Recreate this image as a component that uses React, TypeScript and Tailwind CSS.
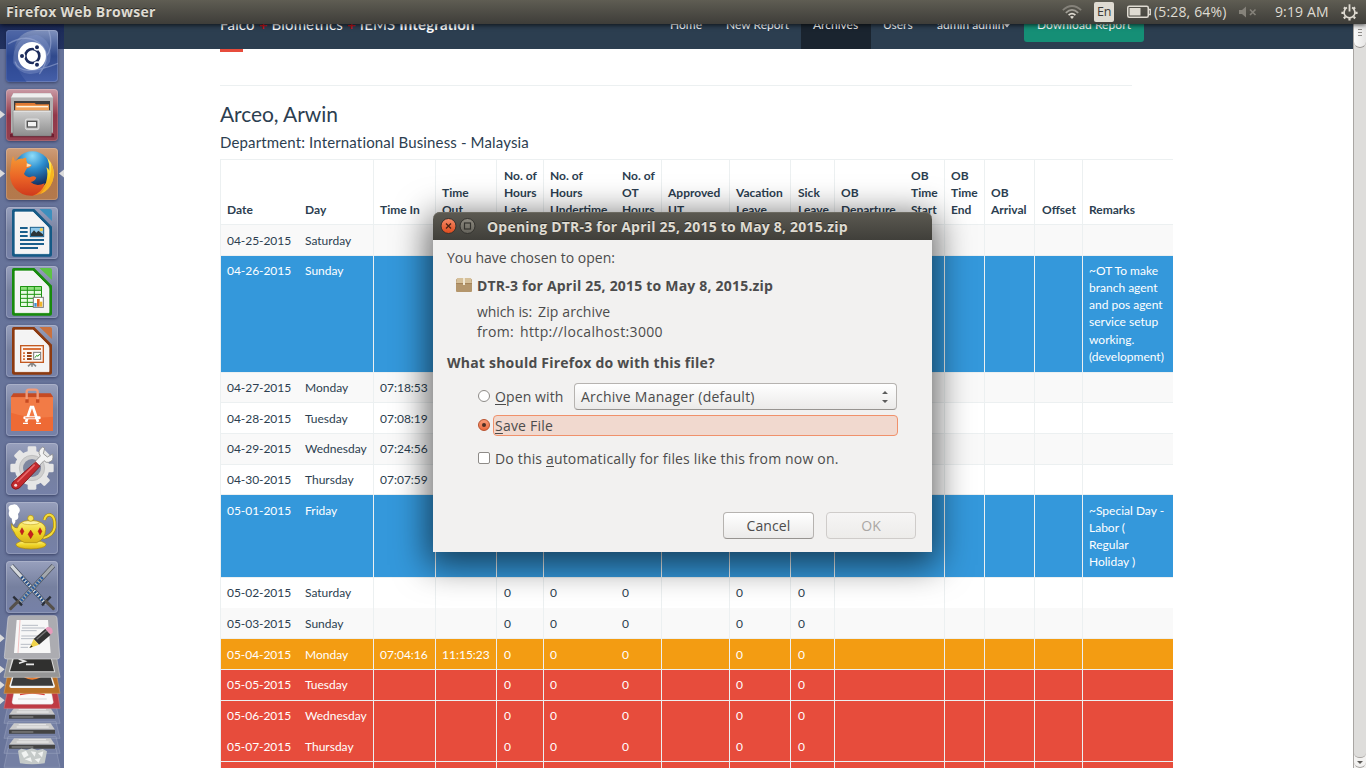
import React from "react";

type Tone = "plain" | "stripe" | "blue" | "orange" | "red";

const COLS = [
  "w-[78px] pl-[6px]",
  "w-[75px] border-l-transparent! pl-[6px]",
  "w-[62px] pl-[6px]",
  "w-[61px] pl-[6px]",
  "w-[47px] pl-[7px]",
  "w-[72px] pl-[6px]",
  "w-[46px] border-l-transparent! pl-[6px]",
  "w-[68px] pl-[6px]",
  "w-[61px] pl-[6px]",
  "w-[44px] pl-[7px]",
  "w-[70px] pl-[6px]",
  "w-[40px] border-l-transparent! pl-[6px]",
  "w-[40px] pl-[6px]",
  "w-[50px] pl-[6px]",
  "w-[48px] pl-[7px]",
  "w-[91px] pl-[6px]",
];

const HEADERS = [
  ["Date"],
  ["Day"],
  ["Time In"],
  ["Time", "Out"],
  ["No. of", "Hours", "Late"],
  ["No. of", "Hours", "Undertime"],
  ["No. of", "OT", "Hours"],
  ["Approved", "UT"],
  ["Vacation", "Leave"],
  ["Sick", "Leave"],
  ["OB", "Departure"],
  ["OB", "Time", "Start"],
  ["OB", "Time", "End"],
  ["OB", "Arrival"],
  ["Offset"],
  ["Remarks"],
];

interface Row {
  h: string;
  pad: string;
  tone: Tone;
  date: string;
  day: string;
  in?: string;
  out?: string;
  zeros?: boolean;
  remarks?: string[];
}

const ROWS: Row[] = [
  { h: "h-[31px] border-b", pad: "pt-[7px]", tone: "stripe", date: "04-25-2015", day: "Saturday" },
  {
    h: "h-[117px] border-b",
    pad: "pt-[6px]",
    tone: "blue",
    date: "04-26-2015",
    day: "Sunday",
    remarks: ["~OT To make", "branch agent", "and pos agent", "service setup", "working.", "(development)"],
  },
  { h: "h-[30px] border-b", pad: "pt-[6px]", tone: "stripe", date: "04-27-2015", day: "Monday", in: "07:18:53" },
  { h: "h-[31px] border-b", pad: "pt-[7px]", tone: "plain", date: "04-28-2015", day: "Tuesday", in: "07:08:19" },
  { h: "h-[31px] border-b", pad: "pt-[6px]", tone: "stripe", date: "04-29-2015", day: "Wednesday", in: "07:24:56" },
  { h: "h-[30px] border-b", pad: "pt-[6px]", tone: "plain", date: "04-30-2015", day: "Thursday", in: "07:07:59" },
  {
    h: "h-[83px] border-b",
    pad: "pt-[7px]",
    tone: "blue",
    date: "05-01-2015",
    day: "Friday",
    remarks: ["~Special Day -", "Labor (", "Regular", "Holiday )"],
  },
  { h: "h-[30px]", pad: "pt-[6px]", tone: "plain", date: "05-02-2015", day: "Saturday", zeros: true },
  { h: "h-[31px] border-b", pad: "pt-[7px]", tone: "stripe", date: "05-03-2015", day: "Sunday", zeros: true },
  { h: "h-[31px] border-b", pad: "pt-[7px]", tone: "orange", date: "05-04-2015", day: "Monday", in: "07:04:16", out: "11:15:23", zeros: true },
  { h: "h-[31px] border-b", pad: "pt-[6px]", tone: "red", date: "05-05-2015", day: "Tuesday", zeros: true },
  { h: "h-[30px]", pad: "pt-[6px]", tone: "red", date: "05-06-2015", day: "Wednesday", zeros: true },
  { h: "h-[31px] border-b", pad: "pt-[7px]", tone: "red", date: "05-07-2015", day: "Thursday", zeros: true },
  { h: "h-[31px] border-b", pad: "pt-[7px]", tone: "red", date: "", day: "" },
];

const TONES: Record<Tone, string> = {
  plain: "bg-white text-[#2c3e50]",
  stripe: "bg-[#f9f9f9] text-[#2c3e50]",
  blue: "bg-[#3498db] text-white",
  orange: "bg-[#f39c12] text-white",
  red: "bg-[#e74c3c] text-white",
};

function DataRow({ row }: { row: Row }) {
  const cell = (i: number): React.ReactNode => {
    if (i === 0) return <span className="tracking-[-0.05px]">{row.date}</span>;
    if (i === 1) return row.day;
    if (i === 2) return row.in;
    if (i === 3) return row.out;
    if (row.zeros && [4, 5, 6, 8, 9].includes(i)) return "0";
    if (i === 15) return row.remarks?.map((l) => <div key={l}>{l}</div>);
    return null;
  };
  return (
    <div className={`flex shrink-0 border-[#ecf0f1] ${row.h} ${TONES[row.tone]}`}>
      {COLS.map((c, i) => (
        <div key={i} className={`shrink-0 border-l border-[#ecf0f1] whitespace-nowrap ${row.pad} ${c}`}>
          {cell(i)}
        </div>
      ))}
    </div>
  );
}

function Tile({ box, bg, left, right, children }: { box: string; bg: string; left?: boolean; right?: boolean; children: React.ReactNode }) {
  return (
    <div className="relative flex h-[52px] shrink-0 justify-center">
      <div className={`h-[52px] w-[52px] overflow-hidden rounded-[4px] shadow-[0_1px_3px_rgba(20,25,60,0.55),inset_0_0_0_1px_rgba(255,255,255,0.18)] ${bg}`}>
        <svg viewBox={box} width="52" height="52">
          {children}
        </svg>
      </div>
      {left && (
        <svg className="absolute top-[21px] left-0" width="5" height="9" viewBox="0 0 5 9">
          <path d="M0 .5 5 4.5 0 8.5Z" fill="#dcdcdc" />
        </svg>
      )}
      {right && (
        <svg className="absolute top-[21px] right-0" width="5" height="9" viewBox="0 0 5 9">
          <path d="M5 .5 0 4.5 5 8.5Z" fill="#dcdcdc" />
        </svg>
      )}
    </div>
  );
}

const GLASS = "bg-linear-to-b from-[#98a0bd] via-[#76809f] to-[#7681a8]";

function DocShape({ dy, dark, light }: { dy: number; dark: string; light: string }) {
  return (
    <g transform={`translate(0 ${dy})`}>
      <path d="M41 6H103L156 59V143Q156 149 150 149H42Q36 149 36 143V12Q36 6 41 6Z" fill={dark} />
      <path d="M45 15H99L141 57Q147 62 147 68V140H45Z" fill="#f4f4f4" stroke="#fff" strokeWidth="2" />
      <path d="M118 6H150Q156 6 156 12V42Q138 24 118 6Z" fill={light} />
    </g>
  );
}

function Launcher() {
  return (
    <div className="relative z-10 flex w-16 shrink-0 flex-col gap-[7px] bg-[linear-gradient(to_bottom,#1b2a58_0px,#22325f_25px,#66739a_25px,#68749a_100%)] pt-[6px]">
      <Tile box="18 90 156 156" bg="bg-linear-to-b from-[#8192bd] via-[#30498c] to-[#4660aa]">
        <path d="M18 90H110Q50 95 42 150Q34 190 80 246H18Z" fill="#2a4796" opacity=".55" />
        <path d="M40 190Q35 110 110 104Q160 120 150 185Q125 225 88 222Q60 222 40 190Z" fill="#7f93c8" opacity=".45" />
        <path d="M24 132Q85 95 127 138Q155 170 118 222M146 90Q165 150 128 180M45 185Q60 235 174 190" fill="none" stroke="#a8b6dc" strokeWidth="4" opacity=".5" />
        <circle cx="96" cy="168" r="42" fill="#fff" />
        <circle cx="97" cy="168" r="21" fill="none" stroke="#1d2c5c" strokeWidth="8" />
        <g stroke="#fff" strokeWidth="4" fill="#1d2c5c">
          <circle cx="66" cy="168" r="8" />
          <circle cx="111" cy="142" r="8" />
          <circle cx="111" cy="194" r="8" />
        </g>
      </Tile>
      <Tile left box="18 267 156 156" bg="bg-linear-to-b from-[#c99ba6] via-[#91384a] to-[#93404f]">
        <defs>
          <linearGradient id="cab" x1="0" y1="0" x2="0" y2="1">
            <stop offset="0" stopColor="#cfcfcf" />
            <stop offset="1" stopColor="#8d8d8d" />
          </linearGradient>
        </defs>
        <path d="M30 402H162V412H30Z" fill="#6e1f30" />
        <path d="M40 280H152L159 292V398H33V292Z" fill="#a3a3a3" />
        <path d="M40 280H152L159 293H33Z" fill="#efefef" />
        <rect x="33" y="293" width="126" height="104" fill="#b1b1b1" />
        <rect x="42" y="303" width="108" height="29" fill="#3c3c3c" />
        <path d="M46 309H104L108 313H147V332H46Z" fill="#e07a34" />
        <path d="M46 316H147V332H46Z" fill="#f2a35a" />
        <rect x="49" y="318" width="95" height="4" fill="#fff4e0" />
        <rect x="39" y="332" width="115" height="76" rx="2" fill="url(#cab)" stroke="#777" strokeWidth="1.5" />
        <rect x="41" y="332" width="111" height="3" fill="#eee" />
        <rect x="76" y="357" width="41" height="32" rx="6" fill="#c9c9c9" stroke="#eee" strokeWidth="2" />
        <rect x="82" y="364" width="28" height="17" fill="#f2f2f2" stroke="#555" strokeWidth="4" />
      </Tile>
      <Tile left right box="18 444 156 156" bg="bg-linear-to-b from-[#cf9d78] via-[#b57848] to-[#b3794d]">
        <defs>
          <radialGradient id="globe" cx=".5" cy=".12" r=".85">
            <stop offset="0" stopColor="#8fdcf8" />
            <stop offset=".4" stopColor="#2c8fd0" />
            <stop offset="1" stopColor="#10204f" />
          </radialGradient>
          <linearGradient id="fox" x1="0" y1="0" x2="0" y2="1">
            <stop offset="0" stopColor="#f59a33" />
            <stop offset=".55" stopColor="#ea6326" />
            <stop offset="1" stopColor="#cf3a1c" />
          </linearGradient>
          <linearGradient id="tail" x1="0" y1="0" x2="0" y2="1">
            <stop offset="0" stopColor="#fff06a" />
            <stop offset=".5" stopColor="#fbd11e" />
            <stop offset="1" stopColor="#ef7c1e" />
          </linearGradient>
        </defs>
        <circle cx="97" cy="511" r="57" fill="url(#globe)" />
        <path d="M142 474Q162 495 162 525Q158 565 120 582Q100 589 80 583Q125 580 138 548Q146 520 139 502Q146 506 148 512Q149 490 142 474Z" fill="url(#tail)" />
        <path d="M153 489Q166 514 157 545Q148 572 120 583Q145 556 150 532Q156 510 153 489Z" fill="#f7b422" />
        <path d="M39 468L45 484Q55 474 68 476Q75 472 79 474Q77 481 82 490L95 495Q93 502 81 505Q76 512 72 522Q80 534 91 531Q102 526 109 533Q105 543 92 546Q108 562 134 550Q127 578 98 587Q65 589 44 564Q24 538 32 503Q33 483 39 468Z" fill="url(#fox)" />
        <path d="M80 490L94 495Q91 500 80 501Z" fill="#fde3b8" />
      </Tile>
      <Tile box="18 21 156 156" bg={GLASS}>
        <DocShape dy={21} dark="#155a86" light="#3d8fbd" />
        <g fill="#1a5f8c">
          <path d="M60 81H83V87H60ZM60 93H83V99H60ZM60 105H83V111H60ZM60 117H132V123H60ZM60 129H132V135H60ZM60 141H114V147H60Z" />
        </g>
        <rect x="91" y="82" width="40" height="28" fill="#8fc8ea" stroke="#1a5f8c" strokeWidth="3" />
        <circle cx="124" cy="89" r="5" fill="#f3cf4e" />
        <path d="M93 108V101L102 91L109 98L115 92L121 97L129 103V108Z" fill="#2d3538" />
      </Tile>
      <Tile box="18 198 156 156" bg={GLASS}>
        <DocShape dy={198} dark="#188a0d" light="#5dc244" />
        <rect x="60" y="258" width="66" height="63" fill="#e9fbe4" />
        <rect x="60" y="258" width="66" height="12" fill="#8fe07c" />
        <path d="M61.500 259.500H124.500V319.500H61.500ZM61 271H125M61 283H125M61 295H125M61 307H125M82 259V320M103 259V320" fill="none" stroke="#1f9413" strokeWidth="3" />
        <rect x="100" y="292" width="30" height="30" fill="#fff" stroke="#777" strokeWidth="3" />
        <rect x="103" y="309" width="7" height="11" fill="#3f8fd0" />
        <rect x="111" y="297" width="8" height="23" fill="#e0661d" />
        <rect x="120" y="305" width="7" height="15" fill="#f0b62b" />
      </Tile>
      <Tile box="18 375 156 156" bg={GLASS}>
        <DocShape dy={375} dark="#8c3a10" light="#c9713f" />
        <path d="M84 499L96 488L108 499M96 488V500" stroke="#888" strokeWidth="5" fill="none" />
        <rect x="62" y="437" width="68" height="50" fill="#fdf5f0" stroke="#c25a22" strokeWidth="4" />
        <path d="M69 444H123V450H69Z" fill="#d9723b" />
        <path d="M69 457H75V462H69ZM69 466H75V471H69ZM69 475H75V480H69Z" fill="#d9723b" />
        <path d="M81 456H95V462H81ZM81 465H95V471H81ZM81 474H95V480H81Z" fill="#9a4417" />
        <rect x="101" y="457" width="21" height="21" fill="#fff" stroke="#777" strokeWidth="3" />
        <path d="M105 473L110 466L114 469L119 462" stroke="#2f9a27" strokeWidth="3" fill="none" />
      </Tile>
      <Tile box="18 12 156 156" bg={GLASS}>
        <path d="M40 40H152L160 52H32Z" fill="#c64a22" />
        <path d="M33 52H159V153H33Z" fill="#ee6a35" />
        <path d="M33 52H159V110Q95 118 33 98Z" fill="#f27b46" />
        <path d="M80 62V36Q80 29 87 29H106Q113 29 113 36V62" fill="none" stroke="#f09a78" strokeWidth="7" />
        <path d="M76 58H86V68H76ZM108 58H118V68H108Z" fill="#c64a22" />
        <path d="M78 126L93 81H99L114 126" fill="none" stroke="#fff" strokeWidth="8" />
        <rect x="70" y="109" width="52" height="9" rx="4" fill="#fff" />
        <path d="M76 113.500H105" stroke="#ee6a35" strokeWidth="3" />
        <path d="M69 130H84M108 130H123" stroke="#fff" strokeWidth="4" />
      </Tile>
      <Tile box="18 189 156 156" bg={GLASS}>
        <g fill="#e6e6e6">
          {[0, 45, 90, 135].map((a) => (
            <rect key={a} x="83" y="199" width="26" height="130" rx="4" transform={`rotate(${a} 96 264)`} />
          ))}
          <circle cx="96" cy="264" r="52" />
        </g>
        <circle cx="96" cy="264" r="38" fill="#cfcfcf" stroke="#b5b5b5" strokeWidth="2" />
        <circle cx="96" cy="264" r="27" fill="#7e879f" />
        <path d="M96 254L121 228Q110 212 128 201L134 204L130 221L142 231L158 222Q163 243 146 247Q138 249 132 242L108 267Z" fill="#f3f3f3" stroke="#8b8b8b" strokeWidth="2.500" />
        <path d="M107 246L120 259L58 324Q46 332 37 323Q31 314 39 306Z" fill="#c32a2e" stroke="#7c1013" strokeWidth="2.500" />
        <path d="M104 254L52 306" stroke="#e8696a" strokeWidth="5" />
        <circle cx="47" cy="316" r="4.500" fill="#f4dada" />
      </Tile>
      <Tile box="18 366 156 156" bg={GLASS}>
        <defs>
          <linearGradient id="lamp" x1="0" y1="0" x2="0" y2="1">
            <stop offset="0" stopColor="#fff48a" />
            <stop offset=".55" stopColor="#efd426" />
            <stop offset="1" stopColor="#d8b41c" />
          </linearGradient>
        </defs>
        <path d="M28 392Q20 376 38 374Q50 370 56 382Q64 392 54 402Q58 418 46 420Q48 430 40 434Q34 424 36 416Q22 408 28 392Z" fill="#fff" />
        <path d="M133 420Q138 402 152 405Q166 410 164 442Q160 466 130 474" fill="none" stroke="#a98708" strokeWidth="10" />
        <path d="M133 420Q138 402 152 405Q166 410 164 442Q160 466 130 474" fill="none" stroke="#f4dc3c" strokeWidth="6" />
        <ellipse cx="93" cy="494" rx="45" ry="13" fill="url(#lamp)" stroke="#a98708" strokeWidth="2" />
        <path d="M34 431Q44 446 52 444Q56 428 72 424Q94 418 114 424Q137 432 137 448Q136 478 110 488H74Q50 478 42 456Q32 446 34 431Z" fill="url(#lamp)" stroke="#a98708" strokeWidth="2" />
        <ellipse cx="92" cy="428" rx="26" ry="6" fill="#fdf3a2" stroke="#b8920a" strokeWidth="1.500" />
        <circle cx="92" cy="415" r="9" fill="#f7e45a" stroke="#a98708" strokeWidth="2" />
        <g fill="#c81e1e" stroke="#8a0d0d" strokeWidth="1">
          <path d="M66 443L72 454L66 465L60 454ZM92 450L100 463L92 476L84 463ZM120 443L126 454L120 465L114 454Z" />
        </g>
      </Tile>
      <Tile box="18 -57 156 156" bg={GLASS}>
        <path d="M34 -43L138 72" stroke="#454d5c" strokeWidth="14" />
        <path d="M34 -43L138 72" stroke="#d4d8dc" strokeWidth="10" />
        <path d="M64 -10L136 70" stroke="#1f4a84" strokeWidth="9" strokeDasharray="6 4" />
        <path d="M160 -43L54 72" stroke="#4a4f59" strokeWidth="14" />
        <path d="M160 -43L54 72" stroke="#a3a8ad" strokeWidth="10" />
        <path d="M128 -8L56 70" stroke="#2c5e9e" strokeWidth="9" strokeDasharray="6 4" />
        <path d="M40 50L66 76M152 50L126 76" stroke="#2b2f38" strokeWidth="7" />
        <path d="M54 64L32 86M138 64L160 86" stroke="#55504a" strokeWidth="9" strokeLinecap="round" />
      </Tile>
      <svg className="-mt-[7px] shrink-0" viewBox="0 99 192 465" width="64" height="155">
        <g stroke="#a9b1cb" strokeOpacity=".6" strokeWidth="2" fill="#8f98b6" fillOpacity=".35">
          <path d="M24 375H168L180 430H12ZM24 425H168L180 475H12ZM24 470H168L180 520H12ZM24 505H168L180 562H12Z" />
        </g>
        {[385, 430, 475].map((y) => (
          <g key={y}>
            <path d={`M42 ${y}H152L165 ${y + 19}H27Z`} fill="#c9c9c9" />
            <path d={`M56 ${y + 4}H138M50 ${y + 11}H146`} stroke="#e4e4e4" strokeWidth="4" />
            <path d={`M27 ${y + 19}H165V${y + 31}H27Z`} fill="#444" />
            <path d={`M35 ${y + 26}H100`} stroke="#808080" strokeWidth="4" />
          </g>
        ))}
        <path d="M54 512L64 506L80 510L96 505L112 511L128 507L141 514L134 550Q96 556 60 550Z" fill="#c5cac9" />
        <path d="M64 518L78 512L86 526L72 534ZM92 514L108 516L104 530ZM114 520L130 514L126 532ZM74 538L92 532L96 546ZM104 538L122 534L116 548Z" fill="#f1f3f2" />
        <path d="M22 335H172L180 385H12Z" fill="#bf3b44" stroke="#d96a70" strokeWidth="2" />
        <path d="M42 335H154L160 366Q160 373 152 373H44Q36 373 36 366Z" fill="#fafafa" stroke="#c9c9c9" />
        <path d="M60 344Q96 334 134 344" stroke="#d93a3a" strokeWidth="4" fill="none" />
        <path d="M54 357H140" stroke="#d5d5d5" strokeWidth="3" />
        <path d="M22 288H170L180 340H12Z" fill="#b87026" stroke="#d39a58" strokeWidth="2" />
        <path d="M38 284H154L165 318Q165 324 158 324H34Q28 324 28 318Z" fill="#f4f4f4" />
        <path d="M42 284H150L160 317H33Z" fill="#3b3b3b" />
        <path d="M74 290Q96 302 120 290" stroke="#ef7f30" strokeWidth="6" fill="none" />
        <path d="M24 234H170L180 292H12Z" fill="#969696" stroke="#c1c1c1" strokeWidth="2" />
        <path d="M38 230H154L166 277H26Z" fill="#dddddd" />
        <path d="M42 234H152L162 274H30Z" fill="#30302f" />
        <path d="M56 237L75 244L57 250M78 253H102" stroke="#e8e8e8" strokeWidth="5" fill="none" />
        <path d="M32 107H163Q170 107 171 114L179 230Q179 237 172 237H20Q12 237 13 230L24 114Q25 107 32 107Z" fill="#acacb1" stroke="#d2d2d6" strokeWidth="2" />
        <path d="M50 120H144L152 219H42Z" fill="#f7f7f7" />
        <path d="M60 120L54 219" stroke="#f0a6a6" strokeWidth="2" />
        <path d="M66 136H114M66 144H134M64 152H110M64 168H132M63 176H118M62 193H100M62 202H84" stroke="#a9b0bb" strokeWidth="2.500" />
        <path d="M101 177L136 146L152 164L117 194Z" fill="#333" />
        <path d="M110 178L141 151" stroke="#777" strokeWidth="4" />
        <path d="M136 146L142 141Q159 140 158 157L152 164Z" fill="#e79abb" />
        <path d="M101 177L117 194L89 204Z" fill="#f0d34a" />
        <path d="M94 196L98 200L88 204Z" fill="#222" />
        <path d="M0 163L14 175L0 187ZM0 257L14 268L0 280ZM0 304L14 315L0 327ZM0 350L14 361L0 373Z" fill="#dcdcdc" />
      </svg>
    </div>
  );
}

function TopPanel() {
  return (
    <div className="relative z-30 flex h-6 shrink-0 items-center bg-linear-to-b from-[#5f5d53] to-[#3e3d39] pl-[6px] font-['Open_Sans',sans-serif] text-[14px] leading-6 text-[#dfdbd2] shadow-[0_1px_5px_rgba(0,0,0,0.75)]">
      <span className="w-[1056px] text-[14px] font-bold tracking-[0.26px] whitespace-nowrap [text-shadow:0_-1px_0_#2b2a26]">Firefox Web Browser</span>
      <svg width="20" height="16" viewBox="0 0 20 16" fill="none" strokeWidth="1.700">
        <path d="M.8 6.200Q10-2.200 19.200 6.200" stroke="#85827a" />
        <path d="M3.800 8.800Q10 3 16.200 8.800" stroke="#a19e96" />
        <path d="M6.600 11.200Q10 8 13.400 11.200" stroke="#dfdbd2" />
        <path d="M8 12.800Q10 11 12 12.800L10 15Z" fill="#dfdbd2" />
      </svg>
      <span className="ml-[12px] flex h-5 w-5 items-center justify-center rounded-[2px] bg-[#dfdbd2] text-[12.500px] tracking-[-0.3px] text-[#3c3b37]">En</span>
      <svg className="ml-[13px]" width="24" height="14" viewBox="0 0 24 14">
        <rect x=".75" y="1.250" width="20.500" height="11" rx="1.500" fill="none" stroke="#dfdbd2" strokeWidth="1.500" />
        <path d="M22 4.500h1.300v5H22" fill="none" stroke="#dfdbd2" strokeWidth="1.300" />
        <rect x="2.500" y="3" width="11" height="7.500" fill="#dfdbd2" />
      </svg>
      <span className="ml-[3px] w-[74px] text-[14px] tracking-[0.15px] whitespace-nowrap">(5:28, 64%)</span>
      <svg className="ml-[11px]" width="18" height="12" viewBox="0 0 18 12">
        <path d="M0 4H3L7 .5V11.500L3 8H0Z" fill="#85827a" />
        <path d="M11 3.500 16.500 9M16.500 3.500 11 9" stroke="#85827a" strokeWidth="1.600" />
      </svg>
      <span className="ml-[18px] w-[54px] text-[14px] tracking-[0.12px] whitespace-nowrap">9:19 AM</span>
      <svg className="ml-[12px]" width="17" height="17" viewBox="0 0 17 17" fill="none" stroke="#dfdbd2">
        <path d="M6 3.600A5.400 5.400 0 1 0 11 3.600" strokeWidth="1.700" />
        <path d="M8.500 .3V7.500" strokeWidth="1.800" />
        <path d="M2.900 3.300 4.400 4.600M14.100 3.300 12.600 4.600M.4 8.800H2.800M14.200 8.800H16.600M2.800 14.300 4.400 12.900M14.200 14.300 12.600 12.900M8.500 14.300V16.600" strokeWidth="2.200" />
      </svg>
    </div>
  );
}

function Navbar() {
  return (
    <div className="flex h-[25px] shrink-0 bg-[#2c3e50] pl-[156px] text-[12px] text-white">
      <div className="-mt-[11px] w-[438px] text-[15px] leading-[22px] tracking-[0.15px] whitespace-nowrap">
        Falco <b className="font-bold text-[#c4151c]">+</b> Biometrics <b className="font-bold text-[#c4151c]">+</b> IEMS <b>Integration</b>
      </div>
      <div className="flex leading-[17px] whitespace-nowrap">
        <span className="-mt-[8px] w-[56px] pl-[12px]">Home</span>
        <span className="-mt-[8px] w-[87px] pl-[12px]">New Report</span>
        <span className="h-[25px] w-[70px] bg-[#1a242f] pl-[12px]">
          <span className="-mt-[8px] block">Archives</span>
        </span>
        <span className="-mt-[8px] w-[54px] pl-[12px]">Users</span>
        <span className="-mt-[8px] flex w-[99px] pl-[12px]">
          admin admin
          <svg className="mt-[8px]" width="6" height="4" viewBox="0 0 6 4">
            <path d="M0 0H6L3 3.500Z" fill="#fff" />
          </svg>
        </span>
        <span className="h-[18px] w-[120px] rounded-b-[3px] bg-[#158f76] text-center">
          <span className="-mt-[8px] block tracking-[0.08px]">Download Report</span>
        </span>
      </div>
    </div>
  );
}

function Page() {
  return (
    <div className="flex w-[1289px] shrink-0 flex-col overflow-hidden bg-white font-['Lato',sans-serif] text-[#2c3e50]">
      <Navbar />
      <div className="ml-[156px] flex flex-col">
        <div className="h-[3px] w-[23px] bg-[#e74c3c]" />
        <div className="mt-[33px] h-px w-[912px] bg-[#ecf0f1]" />
        <div className="mt-[15px] text-[21px] leading-[25px] tracking-[-0.08px]">Arceo, Arwin</div>
        <div className="mt-[6px] text-[15px] leading-[20px] tracking-[0.14px]">Department: International Business - Malaysia</div>
        <div className="mt-[7px] flex w-[953px] flex-col border-t border-[#ecf0f1] text-[12px] leading-[17.140px]">
          <div className="flex h-[65px] shrink-0 border-b border-[#ecf0f1] font-bold">
            {HEADERS.map((lines, i) => (
              <div key={i} className={`flex shrink-0 flex-col justify-end border-l border-[#ecf0f1] pb-[6px] whitespace-nowrap ${COLS[i]}`}>
                {lines.map((l) => (
                  <span key={l}>{l}</span>
                ))}
              </div>
            ))}
          </div>
          {ROWS.map((r, i) => (
            <DataRow key={i} row={r} />
          ))}
        </div>
      </div>
    </div>
  );
}

function Scrollbar() {
  return (
    <div className="flex w-[13px] shrink-0 flex-col justify-between border-l border-[#a9a6a3] bg-[#dedddb]">
      <div className="flex h-[24px] flex-col items-center gap-[2px] rounded-b-[6px] border-b border-[#9b9895] bg-linear-to-r from-[#fbfbfb] to-[#e6e5e4] pt-[5px]">
        <i className="h-px w-[4px] bg-[#8f8c89]" />
        <i className="h-px w-[4px] bg-[#8f8c89]" />
        <i className="h-px w-[4px] bg-[#8f8c89]" />
      </div>
      <div className="bg-[#f3f2f1]">
        <div className="h-[5px] rounded-b-[6px] border-b border-[#a9a6a3] bg-[#dedddb]" />
        <div className="flex h-[10px] items-center justify-center rounded-b-[6px] border-b border-[#a9a6a3]">
          <svg width="6" height="3" viewBox="0 0 6 3">
            <path d="M0 0H6L3 3Z" fill="#5c5a57" />
          </svg>
        </div>
      </div>
    </div>
  );
}

function Dialog() {
  return (
    <div className="absolute top-[212px] left-[433px] z-20 flex h-[340px] w-[499px] flex-col rounded-t-[7px] bg-[#f2f1f0] font-['Open_Sans',sans-serif] text-[14px] leading-5 whitespace-nowrap text-[#4c4c4c] shadow-[0_8px_34px_5px_rgba(0,0,0,0.6)]">
      <div className="flex h-[28px] shrink-0 items-center rounded-t-[7px] bg-linear-to-b from-[#5c5a52] to-[#403f3a] pl-[7px] shadow-[inset_0_1px_0_#6c6a61]">
        <svg width="36" height="18" viewBox="0 0 36 18">
          <defs>
            <linearGradient id="close" x1="0" y1="0" x2="0" y2="1">
              <stop offset="0" stopColor="#f58b68" />
              <stop offset="1" stopColor="#df4a1c" />
            </linearGradient>
            <linearGradient id="max" x1="0" y1="0" x2="0" y2="1">
              <stop offset="0" stopColor="#8d8a80" />
              <stop offset="1" stopColor="#65635b" />
            </linearGradient>
          </defs>
          <circle cx="8.500" cy="9" r="7.500" fill="url(#close)" stroke="#33322e" />
          <path d="M6 6.500 11 11.500M11 6.500 6 11.500" stroke="#4b2415" strokeWidth="1.300" />
          <circle cx="27.500" cy="9" r="7.500" fill="url(#max)" stroke="#33322e" />
          <rect x="24.500" y="6" width="6" height="6" fill="none" stroke="#33322e" strokeWidth="1.200" />
        </svg>
        <span className="ml-[11px] pt-[1px] text-[14px] font-bold tracking-[0.21px] text-[#dfdbd2] [text-shadow:0_-1px_0_#2b2a26]">Opening DTR-3 for April 25, 2015 to May 8, 2015.zip</span>
      </div>
      <div className="flex flex-col pt-[8px] pl-[14px]">
        <div>You have chosen to open:</div>
        <div className="mt-[8px] flex pl-[9px] font-bold tracking-[0.2px]">
          <svg className="mt-[2px] mr-[5px]" width="16" height="14" viewBox="0 0 16 14">
            <rect y="1" width="16" height="13" rx="1" fill="#b4966c" />
            <path d="M1 0H15L16 6H0Z" fill="#d6c09a" />
            <path d="M0 5.500H16" stroke="#a4845a" />
            <rect x="7" y="0" width="2" height="7" fill="#efe6d2" />
          </svg>
          DTR-3 for April 25, 2015 to May 8, 2015.zip
        </div>
        <div className="mt-[6px] flex gap-[6px] pl-[30px]">
          <span className="tracking-[-0.08px]">which is:</span>
          <span className="tracking-[0.12px]">Zip archive</span>
        </div>
        <div className="flex gap-[6px] pl-[30px]">
          <span className="tracking-[0.3px]">from:</span>
          <span className="tracking-[0.36px]">http://localhost:3000</span>
        </div>
        <div className="mt-[11px] font-bold tracking-[0.22px]">What should Firefox do with this file?</div>
        <div className="mt-[10px] flex h-[27px] items-center pl-[31px]">
          <span className="-mt-[2px] h-[12px] w-[12px] rounded-full border border-[#8e8b88] bg-white" />
          <span className="ml-[5px] w-[79px] tracking-[0.1px]">
            <u className="underline-offset-2">O</u>pen with
          </span>
          <span className="flex h-[27px] w-[323px] items-center justify-between rounded-[4px] border border-[#b6b3b0] border-b-[#979491] bg-linear-to-b from-white to-[#ebeae9] pr-[8px] pl-[6px] tracking-[0.24px]">
            Archive Manager (default)
            <svg width="6" height="12" viewBox="0 0 6 12">
              <path d="M0 3H6L3 0ZM0 9H6L3 12Z" fill="#5c5c5c" />
            </svg>
          </span>
        </div>
        <div className="mt-[5px] flex h-[21px] items-center pl-[31px]">
          <span className="-mt-[2px] flex h-[12px] w-[12px] items-center justify-center rounded-full border border-[#b8502c] bg-linear-to-b from-[#f79a76] to-[#ea6a3e]">
            <i className="h-[4px] w-[4px] rounded-full bg-[#4c2f24]" />
          </span>
          <span className="ml-[3px] h-[21px] w-[405px] rounded-[4px] border border-[#f0916b] bg-[#f1d9cf] pl-[1px] leading-[19px] tracking-[0.22px]">
            <u className="underline-offset-2">S</u>ave File
          </span>
        </div>
        <div className="mt-[13px] flex h-5 items-center pl-[31px]">
          <span className="-mt-[2px] h-[12px] w-[12px] rounded-[2px] border border-[#8e8b88] bg-white" />
          <span className="ml-[5px] tracking-[0.17px]">
            Do this <u className="underline-offset-2">a</u>utomatically for files like this from now on.
          </span>
        </div>
        <div className="mt-[43px] flex h-[27px] gap-[12px] pl-[276px] text-center leading-[25px]">
          <span className="w-[91px] rounded-[4px] border border-[#b6b3b0] border-b-[#979491] bg-linear-to-b from-white to-[#ebeae9] tracking-[0.1px]">Cancel</span>
          <span className="w-[90px] rounded-[4px] border border-[#cfccca] bg-linear-to-b from-[#f6f5f5] to-[#edecea] text-[#aaa7a4]">OK</span>
        </div>
      </div>
    </div>
  );
}

export default function App() {
  return (
    <div className="relative flex h-[768px] w-[1366px] flex-col overflow-hidden bg-white">
      <TopPanel />
      <div className="flex h-[744px] overflow-hidden">
        <Launcher />
        <Page />
        <Scrollbar />
      </div>
      <Dialog />
    </div>
  );
}
